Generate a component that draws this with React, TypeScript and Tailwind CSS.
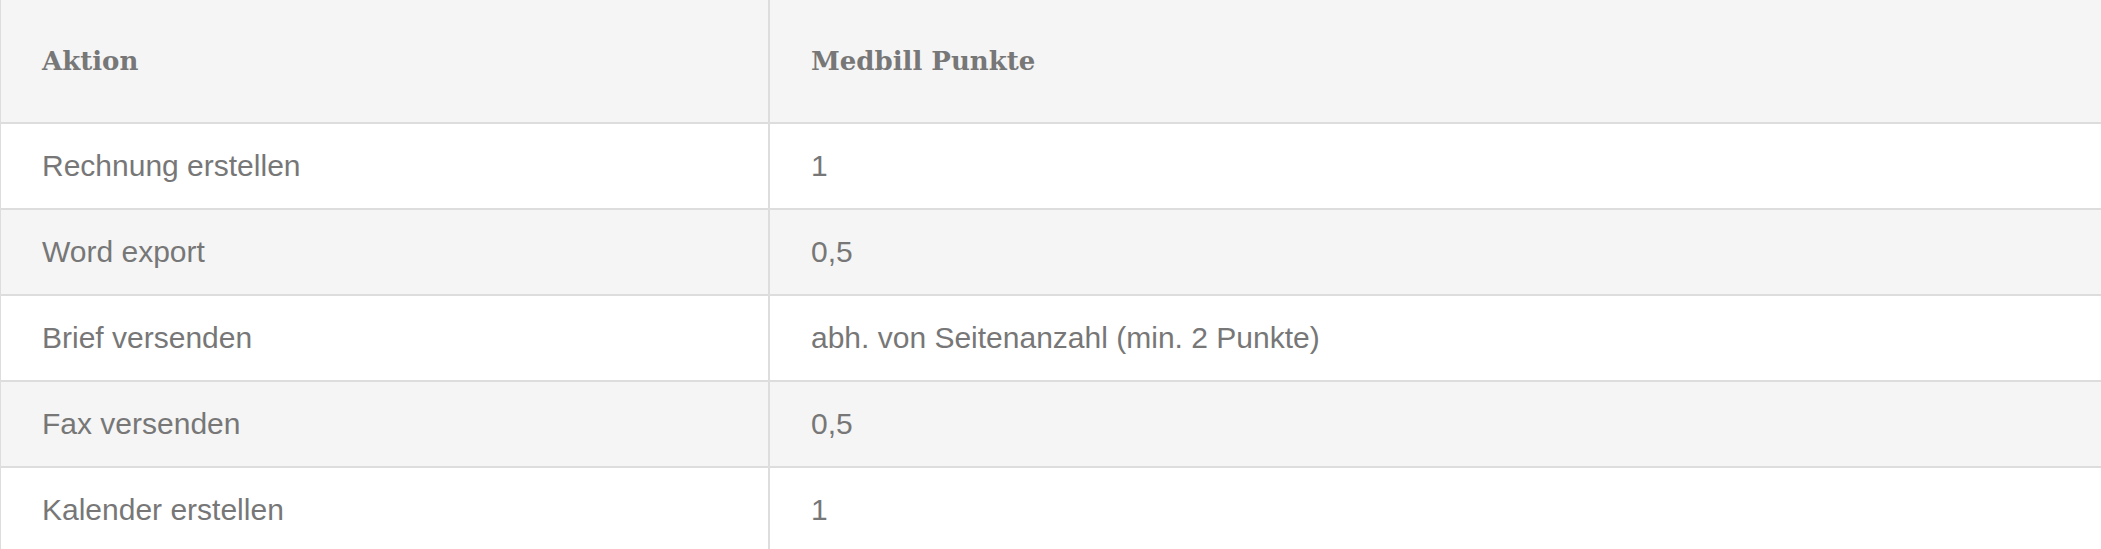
const rows = [
  { action: "Rechnung erstellen", points: "1" },
  { action: "Word export", points: "0,5" },
  { action: "Brief versenden", points: "abh. von Seitenanzahl (min. 2 Punkte)" },
  { action: "Fax versenden", points: "0,5" },
  { action: "Kalender erstellen", points: "1" },
];

export default function App() {
  return (
    <div className="w-[2101px] h-[549px] overflow-hidden bg-white">
      <div className="border-l border-[#dddddd] text-[#777777]">
        {/* header */}
        <div className="grid grid-cols-[767px_1fr] h-[124px] bg-[#f5f5f5] border-b-2 border-[#dddddd] font-['DejaVu_Serif',serif] font-bold text-[26px]">
          <div className="flex items-center pl-[41px]">Aktion</div>
          <div className="flex items-center pl-[41px] border-l-2 border-[#dddddd]">Medbill Punkte</div>
        </div>
        {rows.map((r, i) => (
          <div
            key={r.action}
            className={`grid grid-cols-[767px_1fr] h-[86px] border-b-2 border-[#dddddd] font-['Liberation_Sans',Arial,sans-serif] text-[30px] ${i % 2 === 1 ? "bg-[#f5f5f5]" : "bg-white"}`}
          >
            <div className="flex items-center pl-[41px] pb-[2px]">{r.action}</div>
            <div className="flex items-center pl-[41px] pb-[2px] border-l-2 border-[#dddddd]">{r.points}</div>
          </div>
        ))}
      </div>
    </div>
  );
}
